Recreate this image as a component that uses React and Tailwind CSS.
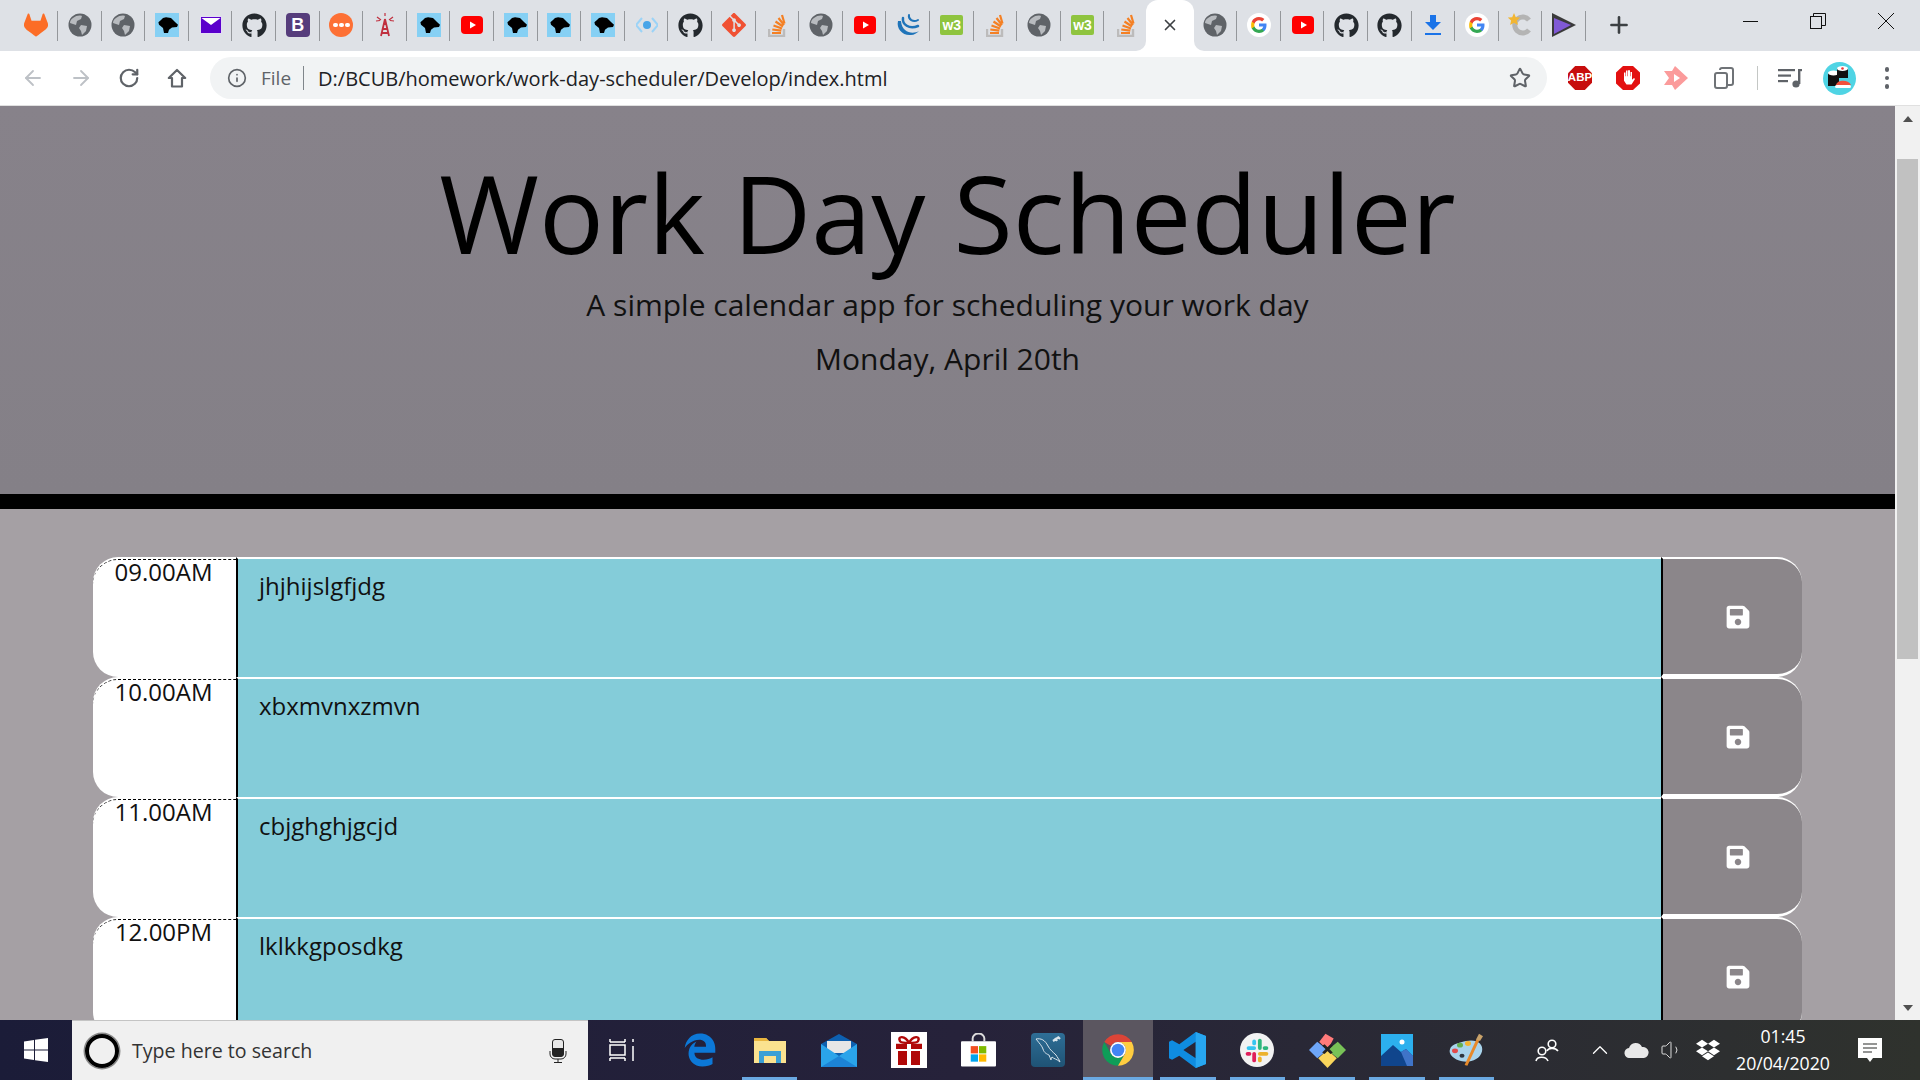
import React from "react";
import { FaGithub, FaSave, FaDropbox, FaEdgeLegacy } from "react-icons/fa";
import { SiGitlab, SiGit } from "react-icons/si";
import { ArrowLeft, ArrowRight, RotateCw, Info, Star, Plus, X, Volume1, ChevronUp } from "lucide-react";

const font = "font-['Open_Sans',sans-serif]";

const Globe = () => (
  <svg width="24" height="24" viewBox="0 0 24 24"><circle cx="12" cy="12" r="11.500" fill="#5f6368" /><path d="M5 5c3-3 8-3 9-2l-1 3-4 2-1 4-3-1-3-1c0-2 1-4 3-5zM13 12l6 1-1 5-4 4-1-4-2-3z" fill="#b8bbbf" /></svg>
);
const Panther = () => (
  <svg width="24" height="24" viewBox="0 0 24 24"><rect width="24" height="24" fill="#86d0f4" /><path d="M3.400 9.300 6 7l2-2 3-.7 5 .7 4 4 3 2.700-1 2.300-5 .5-3 2.200-1 3.300H9l-1-5-4-3.300z" fill="#000" /></svg>
);
const Youtube = () => (
  <svg width="22" height="18" viewBox="0 0 22 18"><rect width="22" height="18" rx="4" fill="#ff0000" /><path d="M9 5.500 15 9l-6 3.500z" fill="#fff" /></svg>
);
const Stack = () => (
  <svg width="18" height="24" viewBox="0 0 18 24"><path d="M1 16v7h15v-7" fill="none" stroke="#bcbbbb" strokeWidth="2.400" /><path d="M4 20h9M4.300 16.500l9 1.200M5.500 12.500l8.500 3M7.500 8.500l7.500 5M10.500 5l5.500 7M14 2l2.500 8.500" stroke="#f48024" strokeWidth="2.200" fill="none" /></svg>
);
const W3 = () => (
  <div className="w-[23px] h-[20px] rounded-[2px] bg-[#8fc43f] flex items-center justify-center text-white text-[14px] leading-none font-bold font-['Liberation_Sans',sans-serif]">w3</div>
);
const Google = () => (
  <svg width="24" height="24" viewBox="0 0 24 24"><circle cx="12" cy="12" r="12" fill="#fff" /><path d="M19.500 12.200c0-.6 0-1.100-.1-1.600H12v3h4.300c-.2 1-.8 1.800-1.600 2.400v2h2.600c1.400-1.400 2.200-3.400 2.200-5.800z" fill="#4285f4" /><path d="M12 20c2.200 0 4-.7 5.300-2l-2.600-2c-.7.500-1.600.8-2.700.8-2.100 0-3.900-1.400-4.500-3.300H4.800v2.100C6.100 18.200 8.800 20 12 20z" fill="#34a853" /><path d="M7.500 13.500c-.3-1-.3-2 0-3V8.400H4.800c-.9 1.800-.9 5.400 0 7.200z" fill="#fbbc05" /><path d="M12 7.200c1.200 0 2.200.4 3.100 1.200l2.300-2.300C16 4.800 14.100 4 12 4 8.800 4 6.100 5.800 4.800 8.400l2.700 2.100C8.100 8.600 9.900 7.200 12 7.200z" fill="#ea4335" /></svg>
);
const icons = {
  gitlab: <SiGitlab size={24} color="#fc6d26" />,
  globe: <Globe />,
  panther: <Panther />,
  mail: <svg width="22" height="18" viewBox="0 0 22 18"><rect width="22" height="18" fill="#e3dcf5" /><rect x="1" y="1" width="20" height="16" fill="#5a00cc" /><path d="M1.500 2h19L11 9z" fill="#fff" /></svg>,
  github: <FaGithub size={25} color="#24292e" />,
  bootstrap: <div className="w-6 h-6 rounded-[4px] bg-[#563d7c] flex items-center justify-center text-white text-[18px] font-bold font-['Liberation_Sans',sans-serif] leading-none">B</div>,
  dots: <div className="w-6 h-6 rounded-full bg-[#fd7035] flex items-center justify-center gap-[1.500px]"><i className="w-[4.500px] h-[4.500px] rounded-full bg-white" /><i className="w-[4.500px] h-[4.500px] rounded-full bg-white" /><i className="w-[4.500px] h-[4.500px] rounded-full bg-white" /></div>,
  tower: <svg width="22" height="24" viewBox="0 0 22 24" fill="none" stroke="#c0303f" strokeWidth="1.800"><path d="M11 6 7 23M11 6l4 17M8.500 16h5M7.500 20h7M9.500 11h3" /><path d="M3 4l4 3M19 4l-4 3M2 8l4-.5M20 8l-4-.5M11 0v3" strokeWidth="1.200" /></svg>,
  yt: <Youtube />,
  code: <svg width="22" height="22" viewBox="0 0 22 22"><path d="M6 4 0 11l6 7M16 4l6 7-6 7" stroke="#9bd3f7" strokeWidth="2" fill="none" /><circle cx="11" cy="11" r="4" fill="#4aa5e8" /></svg>,
  git: <SiGit size={24} color="#f05133" />,
  so: <Stack />,
  jquery: <svg width="24" height="24" viewBox="0 0 24 24" fill="none" stroke="#1f74b9" strokeLinecap="round"><path d="M2 8c-2 8 5 15 13 14 3 0 6-2 8-4-5 3-17 3-18-10z" fill="#1f74b9" stroke="none" /><path d="M7 5c-1 6 6 12 15 8" strokeWidth="2.500" /><path d="M13 2c-1 4 4 8 9 5" strokeWidth="2" /></svg>,
  w3: <W3 />,
  x: <X size={18} color="#3c4043" strokeWidth={2.200} />,
  google: <Google />,
  download: <svg width="16" height="22" viewBox="0 0 16 22"><path d="M5 1h6v7h5l-8 8-8-8h5z" fill="#1a73e8" /><rect y="19" width="16" height="2" fill="#1a73e8" /></svg>,
  c: <svg width="24" height="24" viewBox="0 0 24 24"><path d="M21 7a8 8 0 1 0 0 10" fill="none" stroke="#b4b4b4" strokeWidth="5" /><path d="M6 0l1.800 4.200 4.400.4-3.300 3 1 4.400L6 9.700 2.100 12l1-4.400-3.300-3 4.400-.4z" fill="#f2b632" /></svg>,
  play: <svg width="24" height="24" viewBox="0 0 24 24"><path d="M0 0 24 12 0 24z" fill="#3a3a3a" /><path d="M2 5 19 12 2 21z" fill="#8059d6" /></svg>,
};
const tabs = ["gitlab","globe","globe","panther","mail","github","bootstrap","dots","tower","panther","yt","panther","panther","panther","code","github","git","so","globe","yt","jquery","w3","so","globe","w3","so","x","globe","google","yt","github","github","download","google","c","play"];

const ActiveBg = () => (
  <>
    <div className="absolute inset-y-0 -left-[2px] -right-[2px] bg-white rounded-t-[12px]" />
    <div className="absolute bottom-0 -left-[12px] w-[10px] h-[10px] bg-white"><div className="w-full h-full bg-[#dee1e6] rounded-br-[10px]" /></div>
    <div className="absolute bottom-0 -right-[12px] w-[10px] h-[10px] bg-white"><div className="w-full h-full bg-[#dee1e6] rounded-bl-[10px]" /></div>
  </>
);

const Tab = ({ name, i }) => {
  const active = name === "x";
  const noSep = active || tabs[i + 1] === "x";
  return (
    <div className={`relative h-[51px] shrink-0 flex items-center justify-center pb-[1px] ${active ? "w-[43.600px] mr-[2px]" : "w-[43.600px]"}`}>
      {active && <ActiveBg />}
      <div className="relative">{icons[name]}</div>
      {!noSep && <div className="absolute right-0 top-[11px] h-[30px] w-[1px] bg-[#94979b]" />}
    </div>
  );
};

const TabStrip = () => (
  <div className="h-[51px] bg-[#dee1e6] flex pl-[14.500px] shrink-0">
    {tabs.map((t, i) => <Tab key={i} name={t} i={i} />)}
    <div className="w-[66px] h-[51px] flex items-center justify-center pb-[1px]"><Plus size={26} color="#3c4043" strokeWidth={2.400} /></div>
    <div className="ml-auto flex">
      <div className="w-[68px] h-[42px] flex items-center justify-center"><div className="w-[15px] h-[1px] bg-[#111]" /></div>
      <div className="w-[68px] h-[42px] flex items-center justify-center">
        <svg width="16" height="16" viewBox="0 0 16 16" fill="none" stroke="#111"><rect x="0.500" y="3.500" width="11" height="12" /><path d="M3.500 3V.5h12v12H12" /></svg>
      </div>
      <div className="w-[68px] h-[42px] flex items-center justify-center"><svg width="16" height="16" viewBox="0 0 16 16" stroke="#111"><path d="M0 0 16 16M16 0 0 16" /></svg></div>
    </div>
  </div>
);

const ToolBtn = ({ children }) => <div className="w-[48px] h-[42px] flex items-center justify-center shrink-0">{children}</div>;

const Toolbar = () => (
  <div className="h-[54px] bg-white flex items-center pl-[9px] shrink-0">
    <ToolBtn><ArrowLeft size={24} color="#bdc1c6" strokeWidth={1.800} /></ToolBtn>
    <ToolBtn><ArrowRight size={24} color="#bdc1c6" strokeWidth={1.800} /></ToolBtn>
    <ToolBtn><RotateCw size={22} color="#5f6368" strokeWidth={2.400} /></ToolBtn>
    <ToolBtn>
      <svg width="20" height="20" viewBox="0 0 20 20" fill="none" stroke="#5f6368" strokeWidth="2.200"><path d="M10 2 1.800 10H5v8.500h10V10h3.200z" strokeLinejoin="round" /></svg>
    </ToolBtn>
    <div className="ml-[9px] w-[1337px] h-[42px] rounded-full bg-[#f1f3f4] flex items-center pl-[17px]">
      <Info size={20} color="#5f6368" strokeWidth={2} />
      <span className={`ml-[14px] text-[19px] text-[#5f6368] pt-[1px] ${font}`}>File</span>
      <div className="ml-[12px] w-[1px] h-[24px] bg-[#80868b]" />
      <span className={`ml-[14px] text-[20px] text-[#202124] pt-[1px] ${font}`}>D:/BCUB/homework/work-day-scheduler/Develop/index.html</span>
      <Star size={22} color="#5f6368" strokeWidth={2.200} className="ml-auto mr-[16px]" />
    </div>
    <div className="ml-[9px] flex items-center">
      <ToolBtn>
        <div className="w-6 h-6 bg-[#c70d0d] [clip-path:polygon(30%_0,70%_0,100%_30%,100%_70%,70%_100%,30%_100%,0_70%,0_30%)] flex items-center justify-center text-white text-[11.500px] font-bold font-['Liberation_Sans',sans-serif]">ABP</div>
      </ToolBtn>
      <ToolBtn>
        <svg width="24" height="24" viewBox="0 0 24 26" preserveAspectRatio="none"><path d="M7 0h10l7 7v12l-7 7H7l-7-7V7z" fill="#e31010" /><path d="M8 12V7h1.500v4h.5V5h1.500v6h.5V4.500H14V11h.5V6.500H16V15l2-2 1 1-3.500 6h-5L8 16z" fill="#fff" /></svg>
      </ToolBtn>
      <ToolBtn>
        <svg width="24" height="24" viewBox="0 0 24 24"><path d="M0 5h8L11 0l13 12-13 12-3-5H0l5-7z" fill="#fb9b9b" /><path d="M10 8v8l6-4z" fill="#fff" /></svg>
      </ToolBtn>
      <ToolBtn>
        <svg width="20" height="22" viewBox="0 0 20 22" fill="none" stroke="#6f7377" strokeWidth="2"><rect x="1" y="6" width="12" height="15" rx="2" /><path d="M6 3V3a2 2 0 0 1 2-2h9a2 2 0 0 1 2 2v13a2 2 0 0 1-2 2h-3" /></svg>
      </ToolBtn>
      <div className="ml-[9px] w-[1px] h-[24px] bg-[#c4c7c5]" />
      <div className="ml-[8px]">
        <ToolBtn>
          <svg width="24" height="20" viewBox="0 0 24 20" fill="#5f6368"><rect width="17" height="2.200" y="1" /><rect width="13" height="2.200" y="6.500" /><rect width="10" height="2.200" y="12" /><rect x="20" y="1" width="2.400" height="15" /><rect x="20" y="1" width="4" height="2.200" /><circle cx="18" cy="16" r="3.600" /></svg>
        </ToolBtn>
      </div>
      <div className="ml-[1px] w-[48px] flex items-center justify-center">
        <svg width="33" height="33" viewBox="0 0 33 33"><circle cx="16.500" cy="16.500" r="16.500" fill="#4fd4e4" /><rect x="5" y="11" width="11" height="13" fill="#111" /><ellipse cx="10.500" cy="11" rx="5.500" ry="2.500" fill="#fff" /><rect x="14" y="6" width="11" height="10" fill="#111" /><ellipse cx="19.500" cy="6.500" rx="5.500" ry="2.500" fill="#fff" /><circle cx="19.500" cy="6.500" r="1.300" fill="#e33" /><path d="M13 23c1-5 12-6 15 0z" fill="#f0503c" /><rect x="12" y="23" width="16" height="3" rx="1.500" fill="#fff" /></svg>
      </div>
      <ToolBtn>
        <div className="flex flex-col gap-[4px]"><i className="w-[4.500px] h-[4.500px] rounded-full bg-[#5f6368]" /><i className="w-[4.500px] h-[4.500px] rounded-full bg-[#5f6368]" /><i className="w-[4.500px] h-[4.500px] rounded-full bg-[#5f6368]" /></div>
      </ToolBtn>
    </div>
  </div>
);

const Row = ({ time, text }) => (
  <div className={`flex h-[120px] ${font}`}>
    <div className="w-[143px] shrink-0 bg-white rounded-l-[25px] pt-[2px]">
      <div className="h-full border-t border-dashed border-black rounded-tl-[25px] text-center text-[24px] leading-[24px] text-[#111] pr-[2px]">{time}</div>
    </div>
    <div className="w-[1425px] shrink-0 border-l-2 border-l-black border-t-2 border-t-white bg-[#84ccd9]">
      <div className="text-[24px] leading-[36px] text-[#111] pl-[21px] pt-[9px]">{text}</div>
    </div>
    <div className="flex-1 h-[120px]">
      <div className="h-[120px] border-l-2 border-l-black border-t-2 border-t-white border-b-[3px] border-b-white rounded-r-[25px] bg-[#8b868a] flex items-center justify-center pl-[10px]">
        <FaSave size={26} color="#fff" />
      </div>
    </div>
  </div>
);

const Scrollbar = () => (
  <div className="w-[25px] shrink-0 bg-[#f1f1f1] flex flex-col items-center">
    <div className="h-[53px] w-full flex items-start justify-center pt-[10px]"><div className="w-0 h-0 border-l-[5.500px] border-r-[5.500px] border-b-[6px] border-l-transparent border-r-transparent border-b-[#505050]" /></div>
    <div className="w-[21px] h-[500px] bg-[#c1c1c1]" />
    <div className="mt-auto pb-[9px]"><div className="w-0 h-0 border-l-[5.500px] border-r-[5.500px] border-t-[6px] border-l-transparent border-r-transparent border-t-[#505050]" /></div>
  </div>
);

const Main = () => (
  <div className="flex-1 min-h-0 flex border-t border-t-[#e0e0e0]">
    <div className="flex-1 overflow-hidden bg-[#a5a0a4]">
      <div className={`h-[388px] text-center text-[#111] ${font} bg-gradient-to-b from-[#87828a] to-[#848087] pt-[47px]`}>
        <h1 className="text-[108px] leading-[120px] font-normal text-black">Work Day Scheduler</h1>
        <p className="text-[30px] leading-[40px] mt-[12px]">A simple calendar app for scheduling your work day</p>
        <p className="text-[30px] leading-[40px] mt-[14px]">Monday, April 20th</p>
      </div>
      <div className="h-[15px] bg-black" />
      <div className="px-[93px] pt-[48px]">
        <Row time="09.00AM" text="jhjhijslgfjdg" />
        <Row time="10.00AM" text="xbxmvnxzmvn" />
        <Row time="11.00AM" text="cbjghghjgcjd" />
        <Row time="12.00PM" text="lklkkgposdkg" />
      </div>
    </div>
    <Scrollbar />
  </div>
);

const TaskBtn = ({ children, line, active }) => (
  <div className={`relative w-[69.700px] h-[60px] shrink-0 flex items-center justify-center ${active ? "bg-[#5b5660]" : ""}`}>
    {children}
    {line && <div className={`absolute bottom-0 h-[3px] bg-[#6aa9e2] ${active ? "inset-x-0" : "left-[7px] right-[7px]"}`} />}
  </div>
);

const Taskbar = () => (
  <div className="h-[60px] shrink-0 flex items-center bg-gradient-to-r from-[#1b1c38] via-[#26223a] to-[#2f322d]">
    <div className="w-[72px] flex justify-center shrink-0">
      <svg width="24" height="24" viewBox="0 0 24 24" fill="#fff"><path d="M0 3.500 10 2v9.500H0zM11 1.800 24 0v11.500H11zM0 12.500h10V22L0 20.500zM11 12.500h13V24l-13-1.800z" /></svg>
    </div>
    <div className="w-[516px] h-[60px] shrink-0 bg-[#f0f0f0] border-t border-t-[#c4c4c4] flex items-center pl-[13px] pr-[21px]">
      <div className="w-[34px] h-[34px] rounded-full border-[4px] border-black shadow-[0_0_0_1.500px_#888]" />
      <span className={`ml-[13px] text-[19.600px] text-[#333] ${font}`}>Type here to search</span>
      <svg width="18" height="24" viewBox="0 0 18 24" className="ml-auto"><rect x="3.500" y="0.500" width="11" height="17" rx="2.500" fill="#e8e8e8" stroke="#222" /><path d="M3.500 9h11v6a2.500 2.500 0 0 1-2.500 2.500H6A2.500 2.500 0 0 1 3.500 15z" fill="#222" /><path d="M1 12v3a5 5 0 0 0 5 5h6a5 5 0 0 0 5-5v-3M9 20v3M5 23.500h8" fill="none" stroke="#222" /></svg>
    </div>
    <div className="w-[68px] shrink-0 flex justify-center">
      <svg width="26" height="24" viewBox="0 0 26 24" fill="none" stroke="#fff" strokeWidth="1.500"><path d="M1 4h15M1 1v3M16 1v3M1 7h15v10H1zM1 20h15M1 20v3M16 20v3M24 1v3M24 8v15" /></svg>
    </div>
    <div className="ml-[9px] flex">
      <TaskBtn><FaEdgeLegacy size={34} color="#0c78d7" /></TaskBtn>
      <TaskBtn line>
        <svg width="32" height="26" viewBox="0 0 32 26"><path d="M0 1h12l3 3h17v22H0z" fill="#fbe28f" /><path d="M0 1h12l3 3H0z" fill="#e9b53e" /><rect x="5" y="14" width="22" height="12" fill="#3aa0d5" /><rect x="10" y="19" width="12" height="7" fill="#fbe28f" /></svg>
      </TaskBtn>
      <TaskBtn>
        <svg width="36" height="33" viewBox="0 0 36 33"><path d="M18 0 36 10v23H0V10z" fill="#0d60b0" /><rect x="6" y="7" width="24" height="12" fill="#e6e6e6" /><path d="M0 10 18 22 36 10v23H0z" fill="#2aa4ea" /><path d="M0 33 18 22 36 33z" fill="#1c83d6" /></svg>
      </TaskBtn>
      <TaskBtn>
        <div className="w-[36px] h-[36px] bg-white flex items-center justify-center">
          <svg width="26" height="30" viewBox="0 0 26 34" preserveAspectRatio="none" fill="#b00808"><path d="M0 10h11v6H0zM15 10h11v6H15zM2 18h9v16H2zM15 18h9v16h-9z" /><path d="M13 9C9 0 1 1 4 7c1 2 5 2 9 2zM13 9c4-9 12-8 9-2-1 2-5 2-9 2z" fill="none" stroke="#b00808" strokeWidth="2.500" /></svg>
        </div>
      </TaskBtn>
      <TaskBtn>
        <svg width="35" height="34" viewBox="0 0 36 34"><path d="M12 8V5a6 5 0 0 1 12 0v3" fill="none" stroke="#ddd" strokeWidth="2" /><rect y="8" width="36" height="26" rx="1" fill="#fff" /><rect x="10" y="13" width="7.500" height="7.500" fill="#f25022" /><rect x="18.500" y="13" width="7.500" height="7.500" fill="#7fba00" /><rect x="10" y="21.500" width="7.500" height="7.500" fill="#00a4ef" /><rect x="18.500" y="21.500" width="7.500" height="7.500" fill="#ffb900" /></svg>
      </TaskBtn>
      <TaskBtn>
        <div className="w-[34px] h-[34px] rounded-[4px] bg-gradient-to-b from-[#2e6e96] to-[#1f5375] flex items-center justify-center">
          <svg width="30" height="30" viewBox="0 0 30 30" fill="none" stroke="#d8e4ec" strokeWidth="1"><path d="M3 4c5-1 9 1 12 7 2 4 5 6 8 9 1 2 3 4 4 7-3-3-6-3-8-5-1 2-1 3-1 3-1-2-1-3-2-5-2-1-5-2-6-6-1-3-3-5-7-10z" /><path d="M20 6l6-4M22 3l2 3M25 2l2 2" strokeWidth="2.200" /></svg>
        </div>
      </TaskBtn>
      <TaskBtn line active>
        <svg width="38" height="38" viewBox="0 0 48 48"><path d="M24 4a20 20 0 0 1 17.320 10H24a10 10 0 0 0-8.660 5L6.680 14A20 20 0 0 1 24 4z" fill="#db4437" /><path d="M6.680 14A20 20 0 0 0 24 44l8.660-15a10 10 0 0 1-17.320 0z" fill="#0f9d58" /><path d="M24 14h17.320A20 20 0 0 1 24 44l8.660-15A10 10 0 0 0 24 14z" fill="#ffcd40" /><circle cx="24" cy="24" r="10" fill="#fff" /><circle cx="24" cy="24" r="8" fill="#4285f4" /></svg>
      </TaskBtn>
      <TaskBtn line>
        <svg width="37" height="36" viewBox="0 0 36 44" preserveAspectRatio="none"><path d="M26 0 36 5v34l-10 5-16-15-7 5-3-2V12l3-2 7 5zM26 12 14 22l12 10z" fill="#0f8ce0" /><path d="M26 0 36 5v34l-10 5z" fill="#27a6f0" /></svg>
      </TaskBtn>
      <TaskBtn line>
        <svg width="34" height="34" viewBox="0 0 36 36"><circle cx="18" cy="18" r="18" fill="#f2f2f2" /><rect x="7" y="14" width="10" height="4" rx="2" fill="#36c5f0" /><rect x="13" y="7" width="4" height="6" rx="2" fill="#36c5f0" /><rect x="19" y="6" width="4" height="12" rx="2" fill="#2eb67d" /><rect x="24" y="14" width="6" height="4" rx="2" fill="#2eb67d" /><rect x="6" y="20" width="6" height="4" rx="2" fill="#e01e5a" /><rect x="13" y="20" width="4" height="11" rx="2" fill="#e01e5a" /><rect x="19" y="20" width="11" height="4" rx="2" fill="#ecb22e" /><rect x="19" y="25" width="4" height="6" rx="2" fill="#ecb22e" /></svg>
      </TaskBtn>
      <TaskBtn line>
        <svg width="37" height="36" viewBox="0 0 36 44" preserveAspectRatio="none"><path d="M18 22 10 12l6-10 8 6z" fill="#ff7b7b" /><path d="M18 22 8 12 0 22l8 10z" fill="#6ea6f7" /><path d="M18 22 28 12l8 10-8 10z" fill="#78c257" /><path d="M18 22 9 32l9 12 9-12z" fill="#f9d65c" /><path d="M14 16l8 10M22 16l-8 10" stroke="#222" strokeWidth="3" /></svg>
      </TaskBtn>
      <TaskBtn line>
        <svg width="32" height="32" viewBox="0 0 32 32"><rect width="32" height="32" fill="#2cb0ee" /><path d="M0 32V22L12 11l8 7 5-3 7 7v10z" fill="#10458c" /><path d="M20 18l5-3 7 7v10H26z" fill="#3f74c8" /><circle cx="21" cy="8" r="2.500" fill="#fff" /></svg>
      </TaskBtn>
      <TaskBtn line>
        <svg width="36" height="34" viewBox="0 0 36 42" preserveAspectRatio="none"><path d="M18 10c10-3 18 3 16 13s-12 14-20 12-14-9-12-15c1-6 10-8 16-10z" fill="#a9d4ec" /><circle cx="7" cy="22" r="3" fill="#e34b4b" /><circle cx="12" cy="15" r="3" fill="#64b050" /><circle cx="20" cy="13" r="3" fill="#f3b431" /><circle cx="14" cy="28" r="2.500" fill="#2e3640" /><path d="M18 40 30 8" stroke="#e88a2a" strokeWidth="3" /><path d="M28 8l3-7 4 3-3 6z" fill="#c9a26a" /></svg>
      </TaskBtn>
    </div>
    <div className="ml-auto flex items-center">
      <div className="w-[65px] flex justify-center pr-[5px]">
        <svg width="24" height="24" viewBox="0 0 24 24" fill="none" stroke="#fff" strokeWidth="1.600"><circle cx="17" cy="6" r="3.800" /><path d="M12 13c1-3 8-4 11 0" /><circle cx="7" cy="13" r="3.800" /><path d="M1 23c1-5 10-5 12 0" /></svg>
      </div>
      <div className="w-[36px] flex justify-center"><ChevronUp size={26} color="#fff" strokeWidth={1.200} /></div>
      <div className="w-[36px] flex justify-center">
        <svg width="25" height="16" viewBox="0 0 25 16"><path d="M6 16a5 5 0 0 1-1-10 7 7 0 0 1 13-1 5.500 5.500 0 0 1 2 11z" fill="#e8e8e8" /></svg>
      </div>
      <div className="w-[36px] flex justify-center"><Volume1 size={24} color="#ddd" strokeWidth={1} /></div>
      <div className="w-[36px] flex justify-center"><FaDropbox size={24} color="#fff" /></div>
      <div className={`w-[114px] flex flex-col items-center text-white text-[17.700px] leading-[27px] ${font}`}>
        <span>01:45</span>
        <span>20/04/2020</span>
      </div>
      <div className="w-[80px] flex justify-center pr-[20px]">
        <svg width="24" height="24" viewBox="0 0 24 24" fill="#fff"><path d="M0 0h24v20h-9l-3 4-3-4H0z" /><path d="M5 6h14M5 10h14M5 14h9" stroke="#2b2d2b" strokeWidth="1.200" /></svg>
      </div>
    </div>
  </div>
);

export default function App() {
  return (
    <div className="w-[1920px] h-[1080px] overflow-hidden flex flex-col">
      <TabStrip />
      <Toolbar />
      <Main />
      <Taskbar />
    </div>
  );
}
